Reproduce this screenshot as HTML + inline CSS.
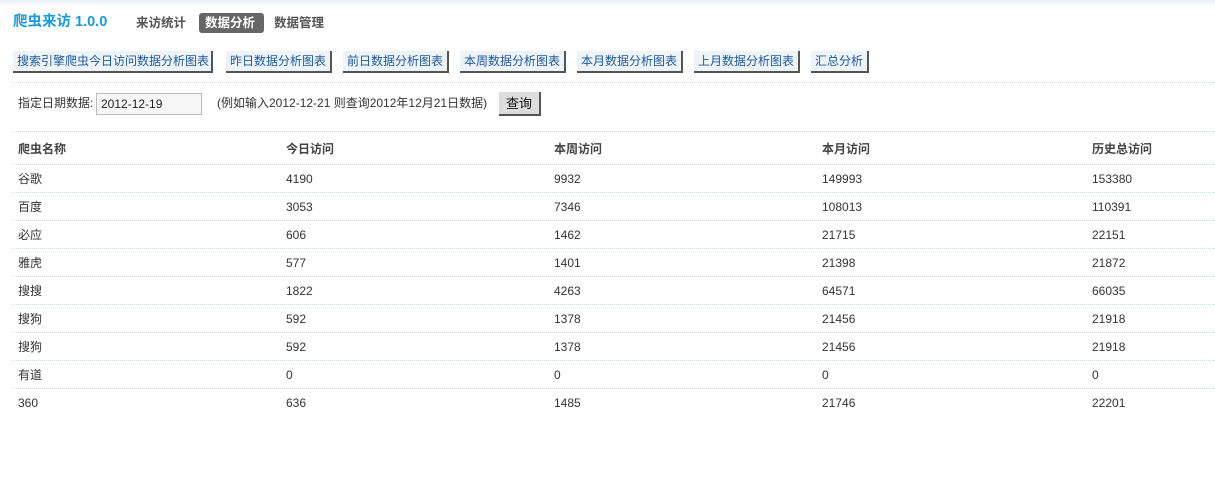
<!DOCTYPE html>
<html><head><meta charset="utf-8"><style>
body{margin:0;width:1215px;height:484px;background:#fff;position:relative;overflow:hidden;font-family:"Liberation Sans","Noto Sans CJK SC",sans-serif;font-size:12px;color:#333}
.top{position:absolute;left:0;top:0;width:1215px;height:6px;background:linear-gradient(#e6eef6,#fff)}
.a{position:absolute;white-space:nowrap;line-height:16px;height:16px}
.title{left:13px;top:14px;font-size:14.5px;font-weight:bold;color:#1a9ad6}
.nav{top:15px;font-size:12.5px;font-weight:bold;color:#555}
.on{background:#666;color:#fff;border-radius:3px;padding:0 6px;width:53px;height:20px;line-height:20px;top:13px}
.btn{top:51px;background:#eef3f8;border-right:2px solid #555;border-bottom:2px solid #555;color:#1d5a9c;padding:0 4px;box-sizing:border-box;height:22px;line-height:20px}
.hl{position:absolute;left:12px;width:1203px;height:1px;background:repeating-linear-gradient(90deg,#c4e4f3 0 1px,#fff 1px 2px)}
.inp{left:96px;top:93px;width:106px;height:22px;border:1px solid #bbb;background:#f7f7f7;box-sizing:border-box;padding-left:4px;line-height:20px;font-size:12px;color:#222}
.q{left:499px;top:92px;width:42px;height:24px;background:#ddd;border-right:2px solid #555;border-bottom:2px solid #555;box-sizing:border-box;text-align:center;line-height:23px;font-size:13px;color:#111}
.th{font-weight:bold;font-size:12px;color:#444}
</style></head><body>
<div class="top"></div>
<div class="a title">爬虫来访 1.0.0</div>
<div class="a nav" style="left:136px">来访统计</div>
<div class="a nav on" style="left:199px">数据分析</div>
<div class="a nav" style="left:274px">数据管理</div>
<div class="a btn" style="left:13px;width:200px">搜索引擎爬虫今日访问数据分析图表</div>
<div class="a btn" style="left:226px;width:106px">昨日数据分析图表</div>
<div class="a btn" style="left:343px;width:106px">前日数据分析图表</div>
<div class="a btn" style="left:460px;width:106px">本周数据分析图表</div>
<div class="a btn" style="left:577px;width:106px">本月数据分析图表</div>
<div class="a btn" style="left:694px;width:106px">上月数据分析图表</div>
<div class="a btn" style="left:811px;width:58px">汇总分析</div>
<div class="hl" style="top:82px"></div>
<div class="a" style="left:18px;top:95px">指定日期数据:</div>
<div class="a inp">2012-12-19</div>
<div class="a" style="left:217px;top:95px">(例如输入2012-12-21 则查询2012年12月21日数据)</div>
<div class="a q">查询</div>
<div class="hl" style="top:131px"></div>
<div class="a th" style="left:18px;top:141px">爬虫名称</div>
<div class="a th" style="left:286px;top:141px">今日访问</div>
<div class="a th" style="left:554px;top:141px">本周访问</div>
<div class="a th" style="left:822px;top:141px">本月访问</div>
<div class="a th" style="left:1092px;top:141px">历史总访问</div>
<div class="hl" style="top:164px"></div>
<div class="hl" style="top:192px"></div>
<div class="hl" style="top:220px"></div>
<div class="hl" style="top:248px"></div>
<div class="hl" style="top:276px"></div>
<div class="hl" style="top:304px"></div>
<div class="hl" style="top:332px"></div>
<div class="hl" style="top:360px"></div>
<div class="hl" style="top:388px"></div>
<div class="a" style="left:18px;top:171px">谷歌</div><div class="a" style="left:286px;top:171px">4190</div><div class="a" style="left:554px;top:171px">9932</div><div class="a" style="left:822px;top:171px">149993</div><div class="a" style="left:1092px;top:171px">153380</div>
<div class="a" style="left:18px;top:199px">百度</div><div class="a" style="left:286px;top:199px">3053</div><div class="a" style="left:554px;top:199px">7346</div><div class="a" style="left:822px;top:199px">108013</div><div class="a" style="left:1092px;top:199px">110391</div>
<div class="a" style="left:18px;top:227px">必应</div><div class="a" style="left:286px;top:227px">606</div><div class="a" style="left:554px;top:227px">1462</div><div class="a" style="left:822px;top:227px">21715</div><div class="a" style="left:1092px;top:227px">22151</div>
<div class="a" style="left:18px;top:255px">雅虎</div><div class="a" style="left:286px;top:255px">577</div><div class="a" style="left:554px;top:255px">1401</div><div class="a" style="left:822px;top:255px">21398</div><div class="a" style="left:1092px;top:255px">21872</div>
<div class="a" style="left:18px;top:283px">搜搜</div><div class="a" style="left:286px;top:283px">1822</div><div class="a" style="left:554px;top:283px">4263</div><div class="a" style="left:822px;top:283px">64571</div><div class="a" style="left:1092px;top:283px">66035</div>
<div class="a" style="left:18px;top:311px">搜狗</div><div class="a" style="left:286px;top:311px">592</div><div class="a" style="left:554px;top:311px">1378</div><div class="a" style="left:822px;top:311px">21456</div><div class="a" style="left:1092px;top:311px">21918</div>
<div class="a" style="left:18px;top:339px">搜狗</div><div class="a" style="left:286px;top:339px">592</div><div class="a" style="left:554px;top:339px">1378</div><div class="a" style="left:822px;top:339px">21456</div><div class="a" style="left:1092px;top:339px">21918</div>
<div class="a" style="left:18px;top:367px">有道</div><div class="a" style="left:286px;top:367px">0</div><div class="a" style="left:554px;top:367px">0</div><div class="a" style="left:822px;top:367px">0</div><div class="a" style="left:1092px;top:367px">0</div>
<div class="a" style="left:18px;top:395px">360</div><div class="a" style="left:286px;top:395px">636</div><div class="a" style="left:554px;top:395px">1485</div><div class="a" style="left:822px;top:395px">21746</div><div class="a" style="left:1092px;top:395px">22201</div>
</body></html>
